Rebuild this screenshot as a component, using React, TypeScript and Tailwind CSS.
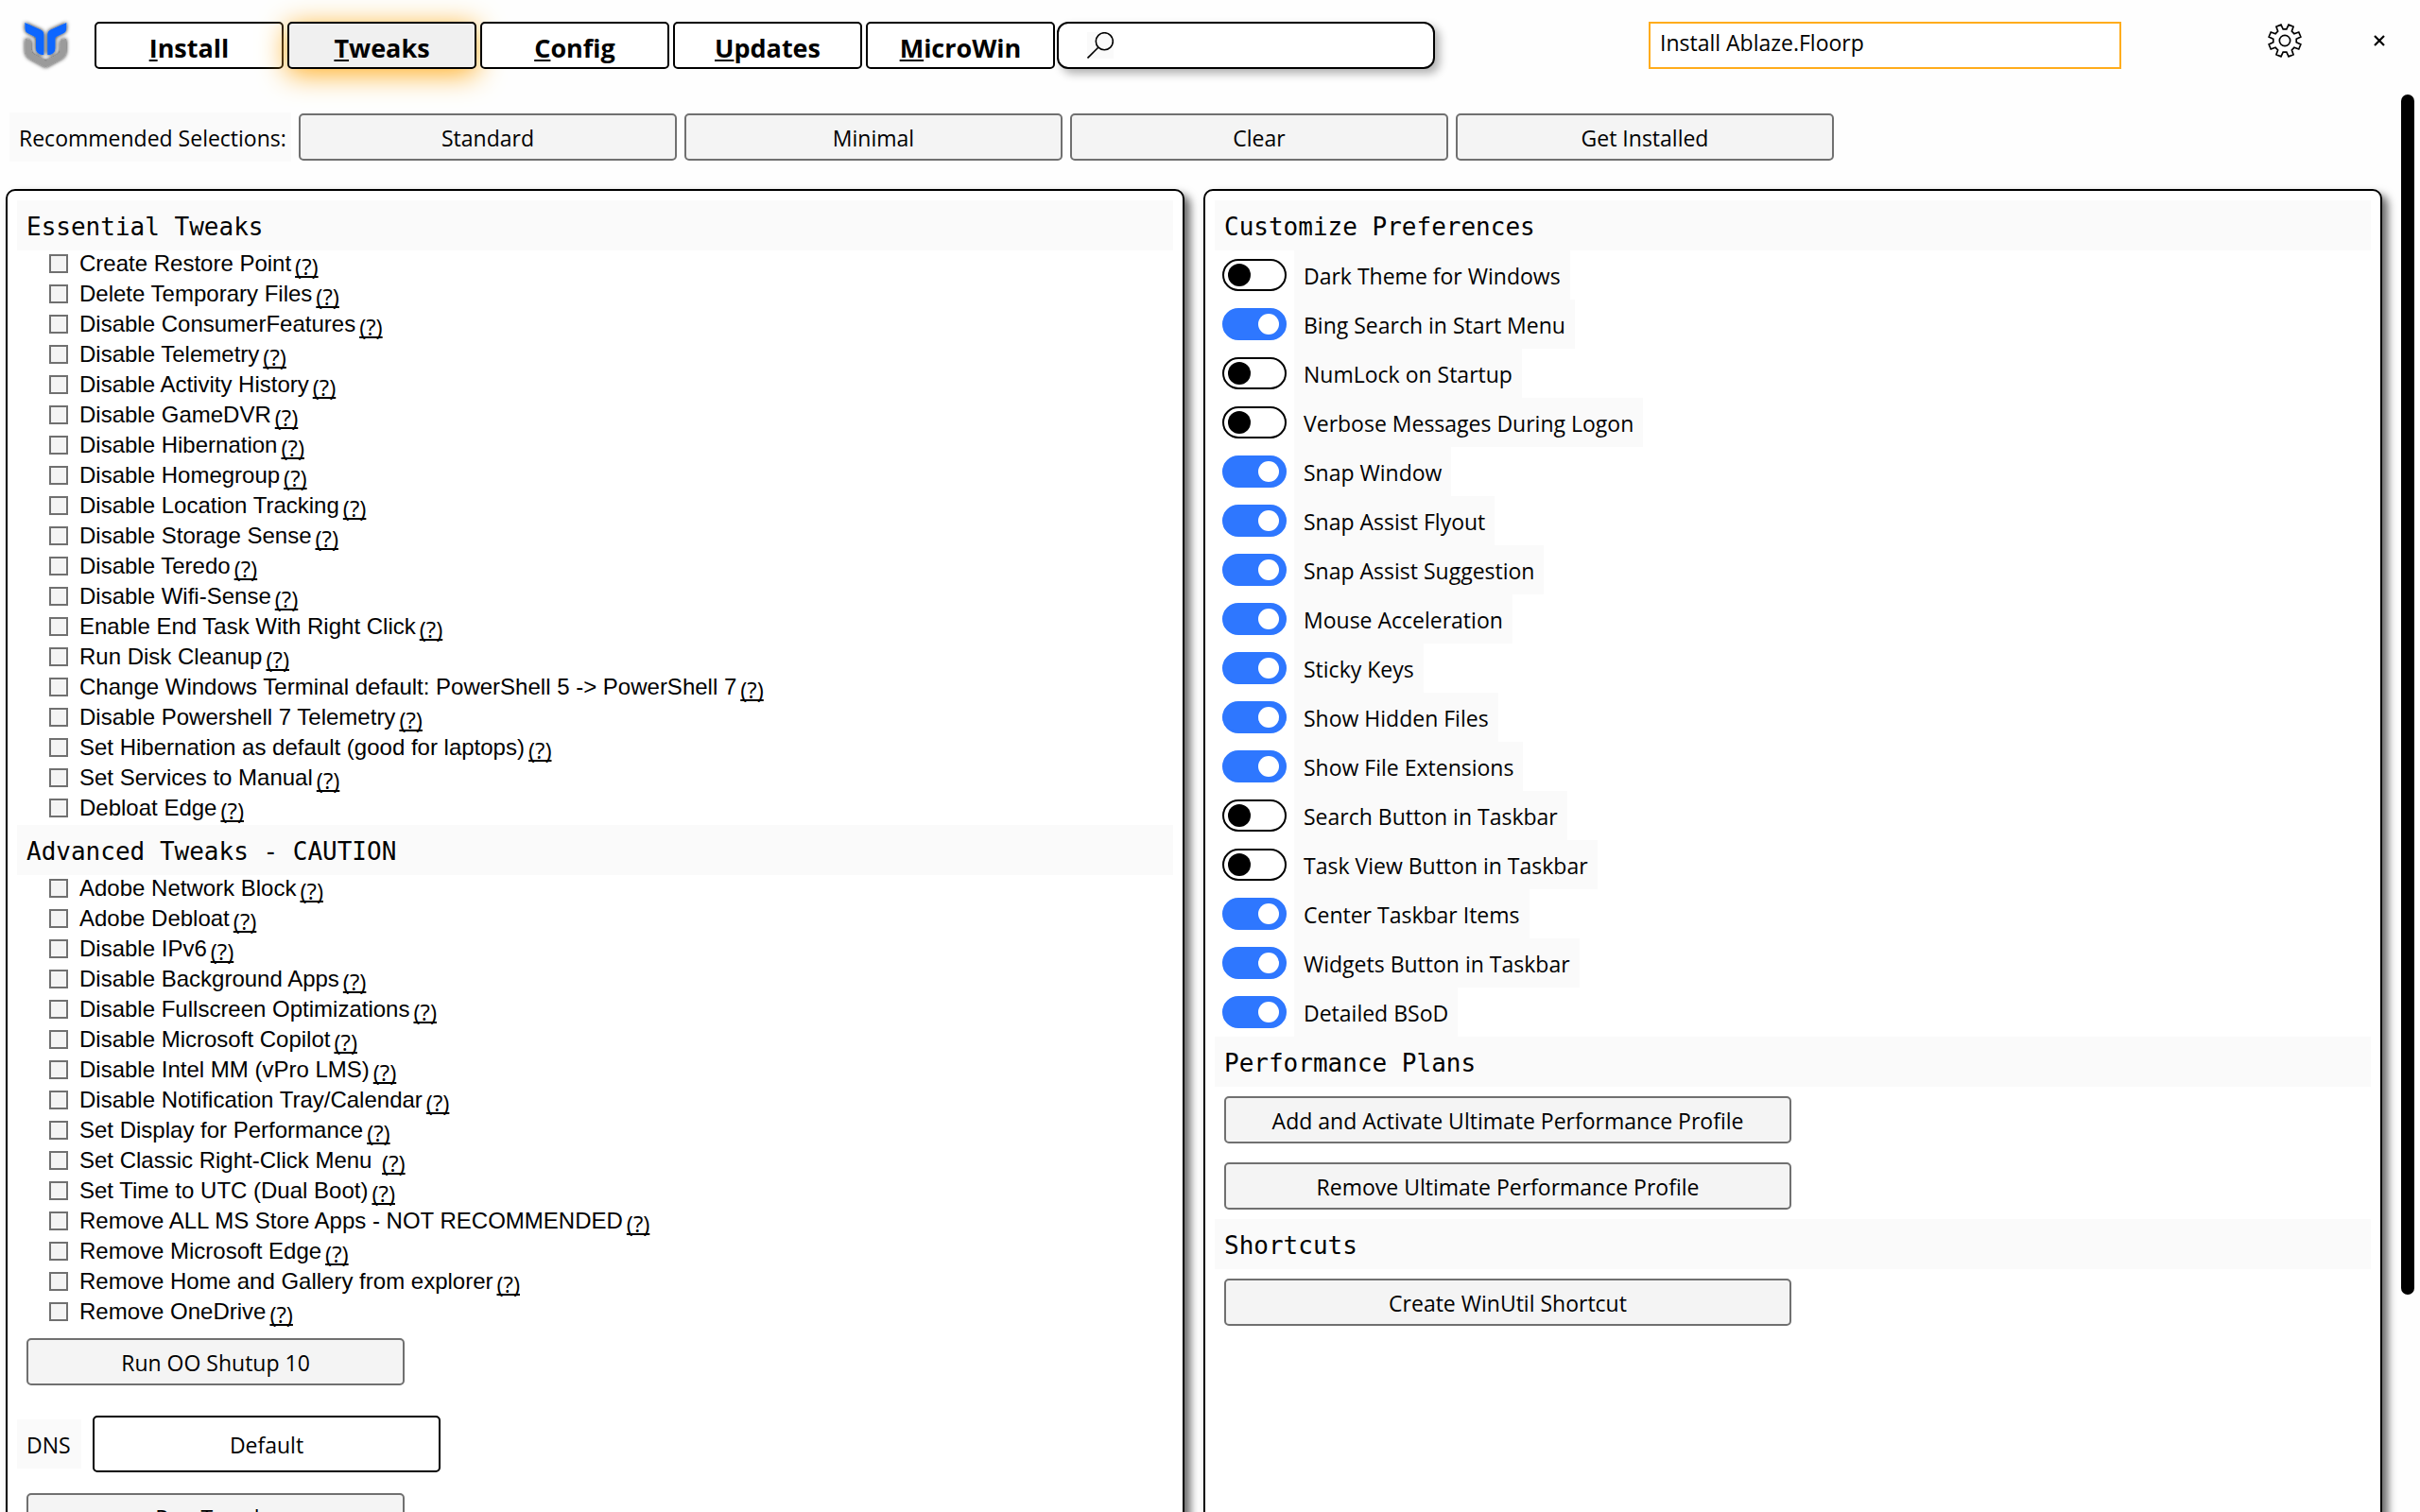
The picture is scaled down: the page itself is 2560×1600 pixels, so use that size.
import type { ReactNode } from "react";

const tabs = ["Install", "Tweaks", "Config", "Updates", "MicroWin"];

const presets = ["Standard", "Minimal", "Clear", "Get Installed"];

const essentialTweaks = [
    "Create Restore Point",
    "Delete Temporary Files",
    "Disable ConsumerFeatures",
    "Disable Telemetry",
    "Disable Activity History",
    "Disable GameDVR",
    "Disable Hibernation",
    "Disable Homegroup",
    "Disable Location Tracking",
    "Disable Storage Sense",
    "Disable Teredo",
    "Disable Wifi-Sense",
    "Enable End Task With Right Click",
    "Run Disk Cleanup",
    "Change Windows Terminal default: PowerShell 5 -> PowerShell 7",
    "Disable Powershell 7 Telemetry",
    "Set Hibernation as default (good for laptops)",
    "Set Services to Manual",
    "Debloat Edge",
];

const advancedTweaks = [
    "Adobe Network Block",
    "Adobe Debloat",
    "Disable IPv6",
    "Disable Background Apps",
    "Disable Fullscreen Optimizations",
    "Disable Microsoft Copilot",
    "Disable Intel MM (vPro LMS)",
    "Disable Notification Tray/Calendar",
    "Set Display for Performance",
    "Set Classic Right-Click Menu ",
    "Set Time to UTC (Dual Boot)",
    "Remove ALL MS Store Apps - NOT RECOMMENDED",
    "Remove Microsoft Edge",
    "Remove Home and Gallery from explorer",
    "Remove OneDrive",
];

const preferences = [
    { name: "Dark Theme for Windows", on: false },
    { name: "Bing Search in Start Menu", on: true },
    { name: "NumLock on Startup", on: false },
    { name: "Verbose Messages During Logon", on: false },
    { name: "Snap Window", on: true },
    { name: "Snap Assist Flyout", on: true },
    { name: "Snap Assist Suggestion", on: true },
    { name: "Mouse Acceleration", on: true },
    { name: "Sticky Keys", on: true },
    { name: "Show Hidden Files", on: true },
    { name: "Show File Extensions", on: true },
    { name: "Search Button in Taskbar", on: false },
    { name: "Task View Button in Taskbar", on: false },
    { name: "Center Taskbar Items", on: true },
    { name: "Widgets Button in Taskbar", on: true },
    { name: "Detailed BSoD", on: true },
];

// Outline of the gear: eight narrow teeth, with a notch at the top
const gearPoints = Array.from({ length: 8 }, (_, i) => 22.5 + i * 45)
    .flatMap((tooth) => [
        [tooth - 14, 37],
        [tooth - 9, 52],
        [tooth + 9, 52],
        [tooth + 14, 37],
    ])
    .map(([deg, r]) => {
        const a = (deg * Math.PI) / 180;
        return `${(60 + r * Math.sin(a)).toFixed(1)},${(60 - r * Math.cos(a)).toFixed(1)}`;
    })
    .join(" ");

const Logo = () => (
    <svg viewBox="60 69 180 150" className="ml-5 mr-5 h-[50px] w-[60px] shrink-0 overflow-visible">
        <defs>
            <filter id="logo-shadow" x="-30%" y="-30%" width="160%" height="160%">
                <feDropShadow dx="0" dy="0" stdDeviation="7" floodColor="#000" floodOpacity="1" />
            </filter>
        </defs>
        <g filter="url(#logo-shadow)">
            <path
                d="M80 122 L99 128 V158 Q99 168 108 174 L145 194 L182 174 Q191 168 191 158 V128 L210 122 V160 Q210 178 196 186 L145 214 L94 186 Q80 178 80 160 Z"
                fill="#9b9b9b"
            />
            <path d="M79 72 L132 96 Q139 100 139 108 V174 H132 Q114 170 114 154 V122 Q114 118 110 116 L86 104 Q80 101 80 94 Z" fill="#0a66ff" />
            <path d="M211 72 L158 96 Q151 100 151 108 V174 H158 Q175 170 175 154 V122 Q175 118 179 116 L204 104 Q210 101 210 94 Z" fill="#0a66ff" />
        </g>
    </svg>
);

const ActionButton = ({ children, className }: { children: ReactNode; className: string }) => (
    <button className={`h-[50px] shrink-0 rounded-[5px] border-2 border-[#707070] bg-[#f4f4f4] pt-0.5 ${className}`}>{children}</button>
);

const SectionTitle = ({ children }: { children: ReactNode }) => (
    <h2 className="flex h-[53px] shrink-0 items-center bg-[#fafafa] px-[10px] pt-1 font-['DejaVu_Sans_Mono',monospace] text-[26px]">{children}</h2>
);

const TweakList = ({ items }: { items: string[] }) => (
    <ul>
        {items.map((item) => (
            <li key={item} className="ml-[34px] flex h-8 items-center pb-1">
                <label className="flex items-center gap-3 whitespace-pre font-['Liberation_Sans',Arial,sans-serif] text-[24px] leading-7">
                    <input type="checkbox" className="size-5 appearance-none border-2 border-[#707070] bg-[#f4f4f4] checked:bg-[#2e77ff]" />
                    {item}
                </label>
                <a href="#" className="ml-1 mt-1.5 text-[24px] leading-6 underline decoration-2 underline-offset-1 [text-decoration-skip-ink:none]">
                    (?)
                </a>
            </li>
        ))}
    </ul>
);

const Toggle = ({ name, on }: { name: string; on: boolean }) => (
    <label className="ml-2 flex h-[52px] items-center gap-2">
        <input
            type="checkbox"
            role="switch"
            defaultChecked={on}
            className="flex h-[34px] w-[68px] shrink-0 appearance-none items-center rounded-full border-2 border-black bg-white px-1 before:size-6 before:rounded-full before:bg-black checked:justify-end checked:border-[#2e77ff] checked:bg-[#2e77ff] checked:px-[6px] checked:before:size-[22px] checked:before:bg-white"
        />
        <span className="flex h-full items-center bg-[#fafafa] px-[10px] pt-0.5">{name}</span>
    </label>
);

const Panel = ({ children }: { children: ReactNode }) => (
    <section className="flex flex-col rounded-[10px] border-2 border-black bg-white p-[10px] shadow-[6px_6px_10px_rgba(0,0,0,0.6)]">{children}</section>
);

export default function App() {
    return (
        <div className="flex h-screen flex-col overflow-hidden bg-[#fefefe] font-['Open_Sans',sans-serif] text-[23px] text-black">
            {/* Top bar */}
            <header className="flex h-[100px] shrink-0 items-start pt-[23px]">
                <Logo />
                <nav className="flex gap-1">
                    {tabs.map((tab) => (
                        <button
                            key={tab}
                            className={`h-[50px] w-[200px] rounded-[5px] border-2 border-black pt-1.5 text-[27px] font-bold ${
                                tab === "Tweaks" ? "bg-[#f0f0f0] shadow-[0_5px_30px_#ffac1c]" : "bg-white"
                            }`}
                        >
                            <span className="underline decoration-2 underline-offset-2 [text-decoration-skip-ink:none]">{tab[0]}</span>
                            {tab.slice(1)}
                        </button>
                    ))}
                </nav>
                <label className="ml-[2px] flex h-[50px] w-[400px] items-start rounded-[12px] border-2 border-black bg-white pl-[30px] pt-[9px] shadow-[5px_5px_10px_rgba(0,0,0,0.3)]">
                    <svg viewBox="0 0 28 28" className="size-7 shrink-0 bg-[#fafafa]" fill="none" stroke="black" strokeWidth="1.6">
                        <circle cx="18.3" cy="9.7" r="9" />
                        <path d="M12 16 L0.5 27.5" />
                    </svg>
                    <input type="text" aria-label="Search" className="min-w-0 flex-1 px-2 outline-none" />
                </label>
                <input
                    type="text"
                    aria-label="Status"
                    defaultValue="Install Ablaze.Floorp"
                    className="ml-auto h-[50px] w-[500px] border-2 border-[#ffac1c] bg-white pb-1.5 pl-[10px] outline-none"
                />
                <button aria-label="Settings" className="ml-[153px] size-10">
                    <svg viewBox="0 0 120 120" className="size-10" fill="none" stroke="black" strokeWidth="5">
                        <polygon points={gearPoints} />
                        <circle cx="60" cy="60" r="17" />
                    </svg>
                </button>
                <button aria-label="Close" className="ml-[60px] mr-[23px] flex size-10 items-center justify-center">
                    <svg viewBox="0 0 12 12" className="size-3" stroke="black" strokeWidth="2.2">
                        <path d="M1 1 L11 11 M11 1 L1 11" />
                    </svg>
                </button>
            </header>

            <div className="flex min-h-0 flex-1 gap-5">
                <main className="flex flex-1 flex-col pl-[6px] pt-[19px]">
                    {/* Presets */}
                    <div className="ml-1 flex items-center gap-2">
                        <span className="flex h-[52px] w-[298px] items-center whitespace-nowrap bg-[#fafafa] pl-[10px] pt-0.5">Recommended Selections:</span>
                        {presets.map((preset) => (
                            <ActionButton key={preset} className="w-[400px]">{preset}</ActionButton>
                        ))}
                    </div>

                    <div className="mt-[29px] grid shrink-0 grid-cols-2 gap-5">
                        <Panel>
                            <SectionTitle>Essential Tweaks</SectionTitle>
                            <TweakList items={essentialTweaks} />
                            <SectionTitle>Advanced Tweaks - CAUTION</SectionTitle>
                            <TweakList items={advancedTweaks} />
                            <ActionButton className="m-[10px] w-[400px]">Run OO Shutup 10</ActionButton>
                            <div className="mb-3 mt-[22px] flex items-center gap-3">
                                <label htmlFor="dns" className="flex h-[52px] w-[68px] items-center bg-[#fafafa] pl-[10px] pt-0.5">DNS</label>
                                <select id="dns" className="h-[60px] w-[368px] appearance-none rounded-[5px] border-2 border-black bg-white pt-0.5 [text-align-last:center]">
                                    <option>Default</option>
                                </select>
                            </div>
                            <ActionButton className="m-[10px] w-[400px]">Run Tweaks</ActionButton>
                        </Panel>

                        <Panel>
                            <SectionTitle>Customize Preferences</SectionTitle>
                            <div className="flex flex-col items-start">
                                {preferences.map((pref) => (
                                    <Toggle key={pref.name} name={pref.name} on={pref.on} />
                                ))}
                            </div>
                            <SectionTitle>Performance Plans</SectionTitle>
                            <ActionButton className="m-[10px] w-[600px]">Add and Activate Ultimate Performance Profile</ActionButton>
                            <ActionButton className="m-[10px] w-[600px]">Remove Ultimate Performance Profile</ActionButton>
                            <SectionTitle>Shortcuts</SectionTitle>
                            <ActionButton className="m-[10px] w-[600px]">Create WinUtil Shortcut</ActionButton>
                        </Panel>
                    </div>
                </main>

                {/* Scroll bar */}
                <div className="mr-[6px] h-[84.7%] w-[14px] shrink-0 rounded-full bg-black" />
            </div>
        </div>
    );
}
